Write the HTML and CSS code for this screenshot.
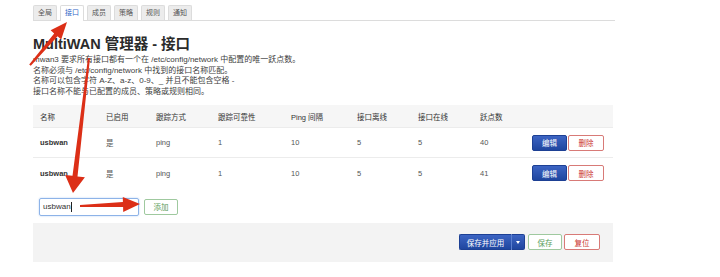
FILE: index.html
```html
<!DOCTYPE html>
<html lang="zh-CN">
<head>
<meta charset="utf-8">
<title>MultiWAN 管理器 - 接口</title>
<link rel="stylesheet" href="styles.css">
</head>
<body>
<div class="page">
  <ul class="tabs">
    <li class="tab">全局</li>
    <li class="tab active">接口</li>
    <li class="tab">成员</li>
    <li class="tab">策略</li>
    <li class="tab">规则</li>
    <li class="tab">通知</li>
  </ul>

  <h1 class="title">MultiWAN 管理器 - 接口</h1>
  <div class="desc">
    mwan3 要求所有接口都有一个在 /etc/config/network 中配置的唯一跃点数。<br>
    名称必须与 /etc/config/network 中找到的接口名称匹配。<br>
    名称可以包含字符 A-Z、a-z、0-9、_ 并且不能包含空格 -<br>
    接口名称不能与已配置的成员、策略或规则相同。
  </div>

  <table class="grid">
    <colgroup>
      <col class="c-name"><col class="c-en"><col class="c-track"><col class="c-rel">
      <col class="c-ping"><col class="c-down"><col class="c-up"><col class="c-metric"><col class="c-act">
    </colgroup>
    <thead>
      <tr>
        <th>名称</th><th>已启用</th><th>跟踪方式</th><th>跟踪可靠性</th><th>Ping 间隔</th><th>接口离线</th><th>接口在线</th><th>跃点数</th><th></th>
      </tr>
    </thead>
    <tbody>
      <tr>
        <td class="name">usbwan</td><td>是</td><td>ping</td><td>1</td><td>10</td><td>5</td><td>5</td><td>40</td>
        <td class="actions"><span class="btn btn-blue">编辑</span><span class="btn btn-red">删除</span></td>
      </tr>
      <tr>
        <td class="name">usbwan</td><td>是</td><td>ping</td><td>1</td><td>10</td><td>5</td><td>5</td><td>41</td>
        <td class="actions"><span class="btn btn-blue">编辑</span><span class="btn btn-red">删除</span></td>
      </tr>
    </tbody>
  </table>

  <div class="add-row">
    <div class="field">usbwan<span class="caret"></span></div>
    <span class="btn btn-green add">添加</span>
  </div>

  <div class="footer">
    <span class="split">
      <span class="btn btn-blue main">保存并应用</span><span class="btn btn-blue drop"><span class="tri"></span></span>
    </span>
    <span class="btn btn-green">保存</span>
    <span class="btn btn-red">复位</span>
  </div>
</div>

<svg class="arrows" width="720" height="277" viewBox="0 0 720 277" aria-hidden="true">
  <polygon points="30.8,65.7 57.6,36.3 61.2,39.5 67,22 50.6,30.3 54.2,33.5 29.2,64.4"/>
  <polygon points="90,58.1 77.5,176.4 84.9,177.3 73,193 65.1,174.9 72.5,175.8 88,57.9"/>
  <polygon points="80,207 123.1,207.1 123.2,212.1 140,204 122.8,197.1 122.9,202.1 80,205"/>
</svg>
</body>
</html>
```
FILE: styles.css
```css
* { box-sizing: border-box; }

body {
  margin: 0;
  position: relative;
  background: #fff;
  color: #444;
  font-family: "Liberation Sans", "Noto Sans CJK SC", sans-serif;
}

.page {
  width: 580px;
  margin-left: 33px;
}

/* tabs */
.tabs {
  display: flex;
  gap: 3px;
  list-style: none;
  margin: 5px 0 0;
  padding: 0;
  border-bottom: 1px solid #dcdcdc;
  width: 582px;
}
.tab {
  height: 15px;
  padding: 0 4px;
  font-size: 7px;
  line-height: 14px;
  color: #555;
  background: #ececec;
  border: 1px solid #dcdcdc;
  border-bottom: none;
  border-radius: 2px 2px 0 0;
}
.tab.active {
  background: #fff;
  color: #2f66c6;
  height: 16px;
  margin-bottom: -1px;
}

/* heading */
.title {
  margin: 15px 0 2px;
  font-size: 14.5px;
  line-height: 17px;
  font-weight: bold;
  color: #2b2b2b;
}
.desc {
  font-size: 8px;
  line-height: 10.7px;
  color: #404040;
}

/* table */
.grid {
  width: 580px;
  margin-top: 7px;
  border-collapse: collapse;
  table-layout: fixed;
  font-size: 7.5px;
  color: #555;
}
.c-name { width: 66px; }
.c-en { width: 50px; }
.c-track { width: 62px; }
.c-rel { width: 73px; }
.c-ping { width: 66px; }
.c-down { width: 61px; }
.c-up { width: 62px; }
.c-metric { width: 52px; }
.c-act { width: 88px; }

.grid th {
  height: 23px;
  padding: 0 0 0 7px;
  text-align: left;
  font-weight: normal;
  color: #333;
  background: #f6f6f6;
}
.grid td {
  height: 30px;
  padding: 0 0 0 7px;
  border-top: 1px solid #ececec;
  vertical-align: middle;
}
.grid td.name {
  font-weight: bold;
  color: #333;
}
.grid td.actions {
  padding-left: 7px;
  white-space: nowrap;
}
.grid td.actions .btn + .btn { margin-left: 1px; }

/* buttons */
.btn {
  display: inline-flex;
  align-items: center;
  justify-content: center;
  height: 16px;
  width: 35px;
  font-size: 7.5px;
  border-radius: 2px;
  border: 1px solid;
  vertical-align: middle;
}
.btn-blue {
  color: #fff;
  border-color: #1d4094;
  background: linear-gradient(#3c64c3, #1f469f);
}
.btn-red {
  color: #c9302c;
  border-color: #d87a77;
  background: #fff;
  width: 36px;
}
.btn-green {
  color: #5b9d5b;
  border-color: #9fc99f;
  background: #fff;
  width: 34px;
}

/* add row */
.add-row {
  display: flex;
  align-items: center;
  gap: 5px;
  margin-top: 10px;
  padding-left: 6px;
}
.field {
  width: 100px;
  height: 18px;
  display: flex;
  align-items: center;
  padding: 0 3px;
  font-size: 8px;
  color: #333;
  border: 1px solid #8db3e8;
  border-radius: 2px;
  box-shadow: 0 0 2px #b3cff2;
}
.caret {
  display: inline-block;
  width: 1px;
  height: 10px;
  background: #222;
}

/* footer */
.footer {
  margin-top: 7px;
  height: 39px;
  display: flex;
  justify-content: flex-end;
  align-items: center;
  gap: 2px;
  padding-right: 13px;
  background: #f3f3f3;
}
.split {
  display: inline-flex;
  margin-right: 1px;
}
.split .main {
  width: 53px;
  border-radius: 2px 0 0 2px;
  border-right-color: #5a7fcf;
}
.split .drop {
  width: 13px;
  border-radius: 0 2px 2px 0;
  border-left: none;
}
.tri {
  width: 0;
  height: 0;
  border-left: 2.5px solid transparent;
  border-right: 2.5px solid transparent;
  border-top: 3px solid #fff;
}

/* annotation arrows */
.arrows {
  position: absolute;
  top: 0;
  left: 0;
  pointer-events: none;
}
.arrows polygon {
  fill: #dc2f17;
}
```
